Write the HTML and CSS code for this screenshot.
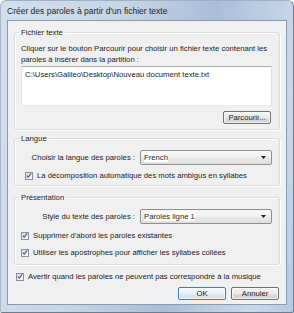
FILE: index.html
```html
<!DOCTYPE html>
<html lang="fr">
  <head>
    <meta charset="UTF-8" />
    <title>Créer des paroles à partir d'un fichier texte</title>
    <link rel="stylesheet" href="styles.css">
  </head>
  <body>
    <div class="window">
      <div class="titlebar">Créer des paroles à partir d'un fichier texte</div>

      <div class="client">
        <fieldset class="group group-file">
          <legend>Fichier texte</legend>
          <p class="hint">Cliquer sur le bouton Parcourir pour choisir un fichier texte contenant les paroles à insérer dans la partition :</p>
          <div class="textbox">C:\Users\Galileo\Desktop\Nouveau document texte.txt</div>
          <div class="row-end">
            <button class="btn btn-browse">Parcourir...</button>
          </div>
        </fieldset>

        <fieldset class="group group-lang">
          <legend>Langue</legend>
          <div class="field">
            <label class="field-label">Choisir la langue des paroles :</label>
            <div class="combo">
              <span>French</span>
              <svg class="combo-arrow" width="5" height="3" viewBox="0 0 5 3"><path d="M0 0h5L2.5 3z" fill="#222"/></svg>
            </div>
          </div>
          <div class="check-row indent">
            <span class="check"><svg width="7" height="7" viewBox="0 0 7 7"><path d="M1 3.6l1.6 1.8L6 1" fill="none" stroke="#3d5a9a" stroke-width="1.3"/></svg></span>
            La décomposition automatique des mots ambigus en syllabes
          </div>
        </fieldset>

        <fieldset class="group group-style">
          <legend>Présentation</legend>
          <div class="field">
            <label class="field-label">Style du texte des paroles :</label>
            <div class="combo">
              <span>Paroles ligne 1</span>
              <svg class="combo-arrow" width="5" height="3" viewBox="0 0 5 3"><path d="M0 0h5L2.5 3z" fill="#222"/></svg>
            </div>
          </div>
          <div class="check-row">
            <span class="check"><svg width="7" height="7" viewBox="0 0 7 7"><path d="M1 3.6l1.6 1.8L6 1" fill="none" stroke="#3d5a9a" stroke-width="1.3"/></svg></span>
            Supprimer d'abord les paroles existantes
          </div>
          <div class="check-row">
            <span class="check"><svg width="7" height="7" viewBox="0 0 7 7"><path d="M1 3.6l1.6 1.8L6 1" fill="none" stroke="#3d5a9a" stroke-width="1.3"/></svg></span>
            Utiliser les apostrophes pour afficher les syllabes collées
          </div>
        </fieldset>

        <div class="check-row warn">
          <span class="check"><svg width="7" height="7" viewBox="0 0 7 7"><path d="M1 3.6l1.6 1.8L6 1" fill="none" stroke="#3d5a9a" stroke-width="1.3"/></svg></span>
          Avertir quand les paroles ne peuvent pas correspondre à la musique
        </div>

        <div class="actions">
          <button class="btn btn-default">OK</button>
          <button class="btn">Annuler</button>
        </div>
      </div>
    </div>
  </body>
</html>
```

FILE: styles.css
```css
* {
  margin: 0;
  padding: 0;
  box-sizing: border-box;
}

body {
  font-family: "Liberation Sans", Arial, sans-serif;
  font-size: 7.7px;
  color: #1b1b1b;
  background: #fff;
}

.window {
  width: 294px;
  height: 313px;
  display: flex;
  flex-direction: column;
  padding: 0 6px 7px 6px;
  border-radius: 6px 6px 2px 2px;
  border: 1px solid #6f7d8e;
  border-top-color: #9fb0c4;
  border-left-color: #a8b9cc;
  background: linear-gradient(100deg, #d3dfec 0%, #c6d6e7 35%, #a9bed8 62%, #bccfe4 78%, #c9d9ec 88%, #b4c8df 100%);
}

.titlebar {
  height: 19px;
  line-height: 20px;
  font-size: 8.5px;
  color: #1e1e1e;
}

.client {
  flex: 1;
  background: #f0f0f0;
  border: 1px solid #8a99ad;
  padding: 6px 6px 0;
  display: flex;
  flex-direction: column;
}

/* group boxes */
.group {
  border: 1px solid #d5dfe5;
  border-radius: 3px;
  box-shadow: inset 1px 1px 0 #fff, 1px 1px 0 #fff;
  padding: 0 7px 0 6px;
}

.group legend {
  margin-left: -2px;
  padding: 0 2px;
  line-height: 11px;
  color: #1b1b1b;
}

.group-file {
  padding-bottom: 5px;
}

.group-lang {
  margin-top: 3px;
  padding-bottom: 4px;
}

.group-style {
  margin-top: 6px;
  padding-bottom: 6px;
}

.hint {
  margin-top: 5px;
  line-height: 11px;
}

.textbox {
  margin-top: 1px;
  height: 40px;
  background: #fff;
  border: 1px solid #abadb3;
  border-left-color: #e2e3ea;
  border-right-color: #dbdfe6;
  border-bottom-color: #e3e9ef;
  padding: 3px 3px;
  line-height: 10px;
}

.row-end {
  display: flex;
  justify-content: flex-end;
  margin-top: 5px;
  padding-right: 1px;
}

/* buttons */
.btn {
  font: inherit;
  color: #1b1b1b;
  height: 13px;
  padding: 0 4px;
  border: 1px solid #707070;
  border-radius: 2px;
  background: linear-gradient(#f2f2f2 0%, #ebebeb 50%, #dddddd 51%, #cfcfcf 100%);
  box-shadow: inset 0 0 0 1px rgba(255, 255, 255, 0.7);
}

.btn-browse {
  width: 48px;
}

.btn-default {
  border-color: #3c7fb1;
  background: linear-gradient(#f4f9fd 0%, #eaf2f9 50%, #dbe9f4 51%, #cfe2f1 100%);
}

/* label + combo rows */
.field {
  display: flex;
  align-items: center;
  margin-top: 6px;
}

.field-label {
  width: 116px;
  text-align: right;
  padding-right: 2px;
}

.combo {
  margin-left: 3px;
  flex: 1;
  height: 15px;
  display: flex;
  align-items: center;
  justify-content: space-between;
  padding: 0 5px 0 3px;
  border: 1px solid #8e8f8f;
  border-radius: 2px;
  background: linear-gradient(#f8f8f8 0%, #f1f1f1 50%, #e8e8e8 51%, #e0e0e0 100%);
}

.combo span {
  background: #fff;
}

/* checkboxes */
.check-row {
  display: flex;
  align-items: center;
  gap: 4px;
  line-height: 11px;
  margin-top: 6px;
}

.check-row.indent {
  margin-top: 5px;
  padding-left: 4px;
}

.check {
  width: 8px;
  height: 8px;
  border: 1px solid #8e8f8f;
  background: linear-gradient(135deg, #dcdcdc, #fbfbfb);
  display: flex;
  align-items: center;
  justify-content: center;
  flex: none;
}

.check svg {
  display: block;
}

.warn {
  margin-top: 6px;
  padding-left: 2px;
}

.actions {
  display: flex;
  justify-content: flex-end;
  gap: 5px;
  margin-top: 5px;
  padding-right: 1px;
}

.actions .btn {
  width: 48px;
}
```
